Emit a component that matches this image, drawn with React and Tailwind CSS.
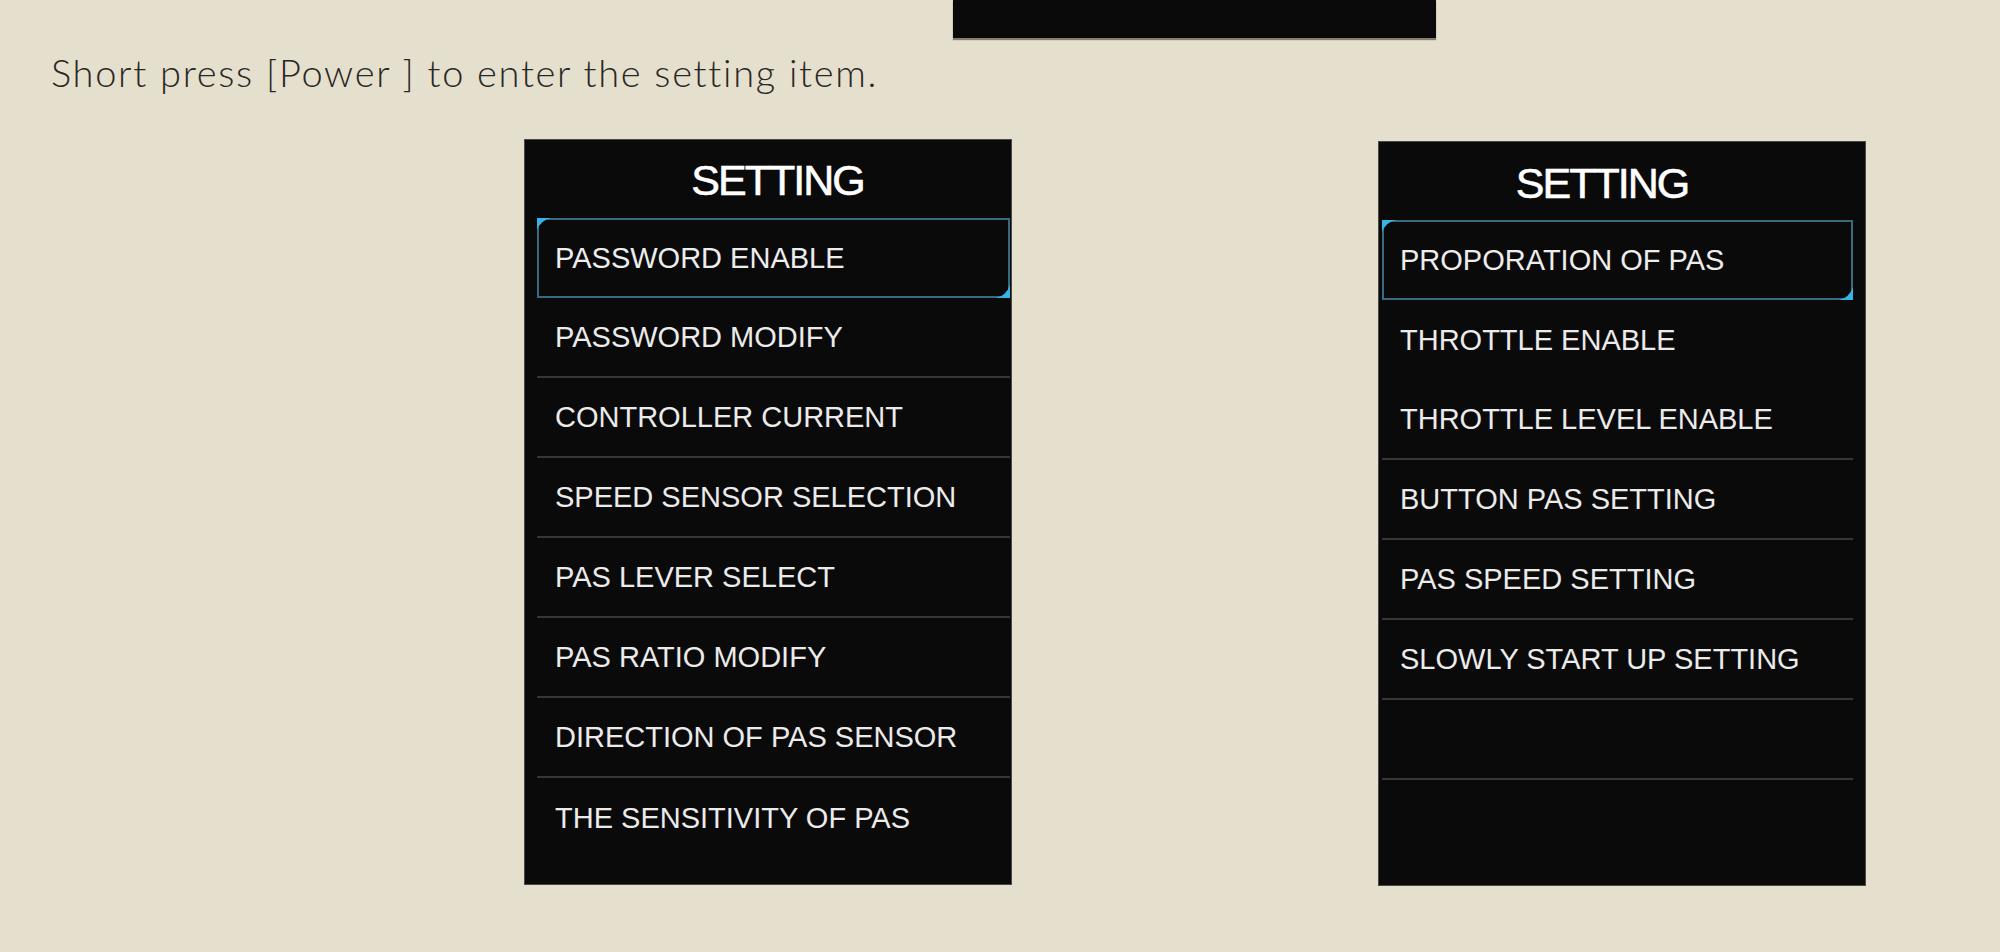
import React from 'react'

const leftItems = [
  { label: 'PASSWORD ENABLE', active: true },
  { label: 'PASSWORD MODIFY', line: true },
  { label: 'CONTROLLER CURRENT', line: true },
  { label: 'SPEED SENSOR SELECTION', line: true },
  { label: 'PAS LEVER SELECT', line: true },
  { label: 'PAS RATIO MODIFY', line: true },
  { label: 'DIRECTION OF PAS SENSOR', line: true },
  { label: 'THE SENSITIVITY OF PAS' },
]

const rightItems = [
  { label: 'PROPORATION OF PAS', active: true },
  { label: 'THROTTLE ENABLE' },
  { label: 'THROTTLE LEVEL ENABLE', line: true },
  { label: 'BUTTON PAS SETTING', line: true },
  { label: 'PAS SPEED SETTING', line: true },
  { label: 'SLOWLY START UP SETTING', line: true },
  { label: '', line: true },
  { label: '' },
]

function Row({ label, active, line }) {
  if (active) {
    return (
      <div className="relative h-[80px] flex items-center pl-[16px] border-2 border-[#3a6a80]">
        {/* corner marks */}
        <svg className="absolute -left-[2px] -top-[2px]" width="14" height="12" viewBox="0 0 14 12">
          <path d="M0 0 H14 Q4 2 0 12 Z" fill="#36b4e6" />
        </svg>
        <svg className="absolute -right-[2px] -bottom-[2px]" width="14" height="13" viewBox="0 0 14 13">
          <path d="M14 0 V13 H0 Q10 11 14 0 Z" fill="#36b4e6" />
        </svg>
        <span className="text-[29px] leading-none text-[#ededed]">{label}</span>
      </div>
    )
  }
  return (
    <div className={`h-[80px] flex items-center pl-[18px] ${line ? 'border-b-2 border-[#383633]' : ''}`}>
      <span className="text-[29px] leading-none text-[#ebebeb]">{label}</span>
    </div>
  )
}

function SettingPanel({ items, side }) {
  const isLeft = side === 'left'
  return (
    <div
      className={`bg-[#0a0a0a] border border-[#4a4a48] w-[488px] flex flex-col ${
        isLeft ? 'h-[746px] pl-[12px] pr-[1px]' : 'h-[745px] mt-[2px] pl-[3px] pr-[12px]'
      }`}
      style={{ fontFamily: '"Liberation Sans", Arial, sans-serif' }}
    >
      <div className={`h-[78px] flex items-center justify-center ${isLeft ? 'pl-[8px] pt-[2px]' : 'pr-[31px] pt-[4px]'}`}>
        <span className="text-[43px] leading-none text-white tracking-[-2px] [-webkit-text-stroke:0.6px_white]">SETTING</span>
      </div>
      <div className="flex flex-col">
        {items.map((it, i) => (
          <Row key={i} {...it} />
        ))}
      </div>
    </div>
  )
}

export default function App() {
  return (
    <div className="w-[2000px] h-[952px] bg-[#e5dfcd] overflow-hidden">
      <div className="ml-[953px] w-[483px] h-[38px] bg-[#0a0a0a] shadow-[0_2px_1px_rgba(70,60,45,0.6)]" />
      <p
        className="mt-[15px] ml-[51px] h-[38px] leading-[38px] text-[38px] font-light tracking-[1.7px] text-[#2a2724]"
        style={{ fontFamily: 'Lato, "Open Sans", sans-serif' }}
      >
        Short press [Power ] to enter the setting item.
      </p>
      <div className="mt-[48px] pl-[524px] flex items-start gap-[366px]">
        <SettingPanel items={leftItems} side="left" />
        <SettingPanel items={rightItems} side="right" />
      </div>
    </div>
  )
}
